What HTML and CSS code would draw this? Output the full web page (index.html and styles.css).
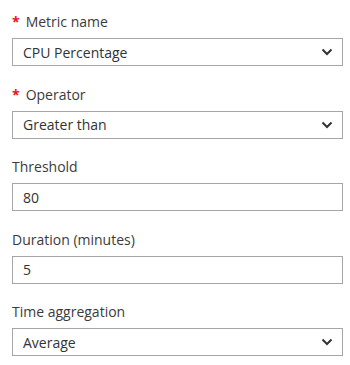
FILE: index.html
```html
<!DOCTYPE html>
<html lang="en">
<head>
  <meta charset="UTF-8">
  <title>Alert criteria</title>
  <link rel="stylesheet" href="styles.css">
</head>
<body>
  <form class="criteria">
    <div class="field">
      <label class="label"><span class="req">*</span>Metric name</label>
      <div class="select">
        <span class="value">CPU Percentage</span>
        <svg class="chevron" width="12" height="8" viewBox="0 0 12 8"><path d="M1.5 1.5 L6 6 L10.5 1.5" fill="none" stroke="#333" stroke-width="2"/></svg>
      </div>
    </div>

    <div class="field">
      <label class="label"><span class="req">*</span>Operator</label>
      <div class="select">
        <span class="value">Greater than</span>
        <svg class="chevron" width="12" height="8" viewBox="0 0 12 8"><path d="M1.5 1.5 L6 6 L10.5 1.5" fill="none" stroke="#333" stroke-width="2"/></svg>
      </div>
    </div>

    <div class="field">
      <label class="label">Threshold</label>
      <input class="input" type="text" value="80">
    </div>

    <div class="field">
      <label class="label">Duration (minutes)</label>
      <input class="input" type="text" value="5">
    </div>

    <div class="field">
      <label class="label">Time aggregation</label>
      <div class="select">
        <span class="value">Average</span>
        <svg class="chevron" width="12" height="8" viewBox="0 0 12 8"><path d="M1.5 1.5 L6 6 L10.5 1.5" fill="none" stroke="#333" stroke-width="2"/></svg>
      </div>
    </div>
  </form>
</body>
</html>
```

FILE: styles.css
```css
* {
  box-sizing: border-box;
  margin: 0;
  padding: 0;
}

body {
  background: #fff;
  color: #333;
  font-family: "Open Sans", "Noto Sans", sans-serif;
  font-size: 14px;
  padding: 12px 8px 0 12px;
}

.field {
  display: flex;
  flex-direction: column;
  margin-bottom: 18.5px;
}

.label {
  color: #3b3b3b;
  line-height: 20px;
  height: 20px;
  margin-bottom: 6px;
}

.req {
  color: #e81123;
  font-weight: bold;
  margin-right: 6px;
}

.select, .input {
  width: 331px;
  height: 28px;
  border: 1px solid #a6a6a6;
  background: #fff;
  font: inherit;
  color: #333;
  padding: 0 10px;
}

.select {
  display: flex;
  align-items: center;
  justify-content: space-between;
}

.input {
  outline: none;
}

.chevron {
  margin-right: -1px;
}
```
